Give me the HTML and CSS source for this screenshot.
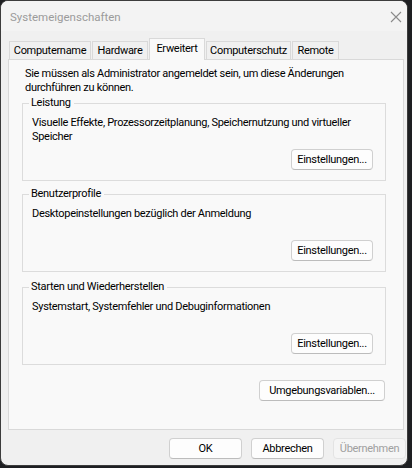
FILE: index.html
```html
<!DOCTYPE html>
<html lang="de">
<head>
<meta charset="utf-8">
<title>Systemeigenschaften</title>
<link rel="stylesheet" href="styles.css">
</head>
<body>
<div class="window">
  <div class="titlebar">
    <span class="title">Systemeigenschaften</span>
    <svg class="close" width="12" height="12" viewBox="0 0 12 12"><path d="M1 1 L11 11 M11 1 L1 11" stroke="#8a8a8a" stroke-width="1.1" fill="none"/></svg>
  </div>
  <div class="body">
    <div class="tabs">
      <div class="tab t-name">Computername</div>
      <div class="tab t-hw">Hardware</div>
      <div class="tab t-adv active">Erweitert</div>
      <div class="tab t-prot">Computerschutz</div>
      <div class="tab t-rem">Remote</div>
    </div>
    <div class="panel">
      <p class="intro">Sie müssen als Administrator angemeldet sein, um diese Änderungen durchführen zu können.</p>
      <fieldset class="group">
        <legend>Leistung</legend>
        <p class="desc">Visuelle Effekte, Prozessorzeitplanung, Speichernutzung und virtueller Speicher</p>
        <div class="actions"><button class="btn settings">Einstellungen...</button></div>
      </fieldset>
      <fieldset class="group">
        <legend>Benutzerprofile</legend>
        <p class="desc">Desktopeinstellungen bezüglich der Anmeldung</p>
        <div class="actions"><button class="btn settings">Einstellungen...</button></div>
      </fieldset>
      <fieldset class="group">
        <legend>Starten und Wiederherstellen</legend>
        <p class="desc">Systemstart, Systemfehler und Debuginformationen</p>
        <div class="actions"><button class="btn settings">Einstellungen...</button></div>
      </fieldset>
      <div class="env-row"><button class="btn env">Umgebungsvariablen...</button></div>
    </div>
    <div class="footer">
      <button class="btn dlg">OK</button>
      <button class="btn dlg">Abbrechen</button>
      <button class="btn dlg disabled" disabled>Übernehmen</button>
    </div>
  </div>
</div>
</body>
</html>
```

FILE: styles.css
```css
* { box-sizing: border-box; }
html, body {
  margin: 0;
  padding: 0;
  background: #1e1f22;
  width: 412px;
  height: 468px;
  overflow: hidden;
}
body {
  font-family: Roboto, "Liberation Sans", Arial, sans-serif;
  font-size: 11px;
  letter-spacing: -0.3px;
  color: #000;
}
.window {
  width: 408px;
  height: 466px;
  background: #f0f0f0;
  border: 1px solid #3c3c3c;
  border-radius: 8px;
  overflow: hidden;
  display: flex;
  flex-direction: column;
}
.titlebar {
  height: 30px;
  background: #f3f3f3;
  display: flex;
  align-items: center;
  justify-content: space-between;
  padding: 0 5px 0 9px;
  flex: none;
}
.title {
  color: #9b9b9b;
  font-size: 11.5px;
  letter-spacing: 0;
  padding-top: 2px;
}
.close { display: block; margin-top: 1px; }
.body {
  flex: 1;
  padding: 7px 3px 0 7px;
  display: flex;
  flex-direction: column;
}
.tabs {
  display: flex;
  align-items: flex-end;
  height: 21px;
  padding-left: 1px;
  position: relative;
  z-index: 1;
}
.tab {
  height: 18px;
  line-height: 17px;
  padding: 0;
  text-align: center;
  background: #f0f0f0;
  border: 1px solid #d9d9d9;
  border-bottom: none;
  margin-right: 1px;
  white-space: nowrap;
}
.t-name { width: 82px; }
.t-hw { width: 56px; }
.t-adv { width: 56px; }
.t-prot { width: 85px; }
.t-rem { width: 47px; }
.tab.active {
  height: 22px;
  line-height: 20px;
  background: #f9f9f9;
  margin-bottom: -1px;
}
.panel {
  height: 371px;
  background: #f9f9f9;
  border: 1px solid #d9d9d9;
  padding: 7px 17px 0 13px;
}
.intro {
  margin: 0 0 0 3px;
  line-height: 14px;
}
.group {
  margin: 1px 0 0 0;
  padding: 0 12px 10px 9px;
  border: 1px solid #dcdcdc;
  min-width: 0;
}
.group + .group { margin-top: 6px; }
.group:last-of-type { margin-top: 8px; }
.group legend {
  padding: 0 3px 0 2px;
  margin-left: -3px;
  line-height: 14px;
}
.desc {
  margin: 6px 0 0 0;
  min-height: 28px;
  line-height: 14px;
}
.actions {
  display: flex;
  justify-content: flex-end;
  margin-top: 5px;
}
.btn {
  font-family: inherit;
  font-size: 11px;
  letter-spacing: -0.3px;
  color: #000;
  background: #fdfdfd;
  border: 1px solid #d0d0d0;
  border-bottom-color: #bcbcbc;
  border-radius: 4px;
  padding: 0;
  height: 21px;
  margin: 0;
}
.settings { width: 82px; }
.env-row {
  display: flex;
  justify-content: flex-end;
  padding-right: 1px;
  margin-top: 15px;
}
.env { width: 126px; }
.footer {
  display: flex;
  justify-content: flex-end;
  gap: 9px;
  padding: 8px 0 0 0;
  margin-right: -2px;
}
.dlg { width: 73px; }
.dlg.disabled {
  color: #a0a0a0;
  background: #f5f5f5;
  border-color: #e3e3e3;
}
```
